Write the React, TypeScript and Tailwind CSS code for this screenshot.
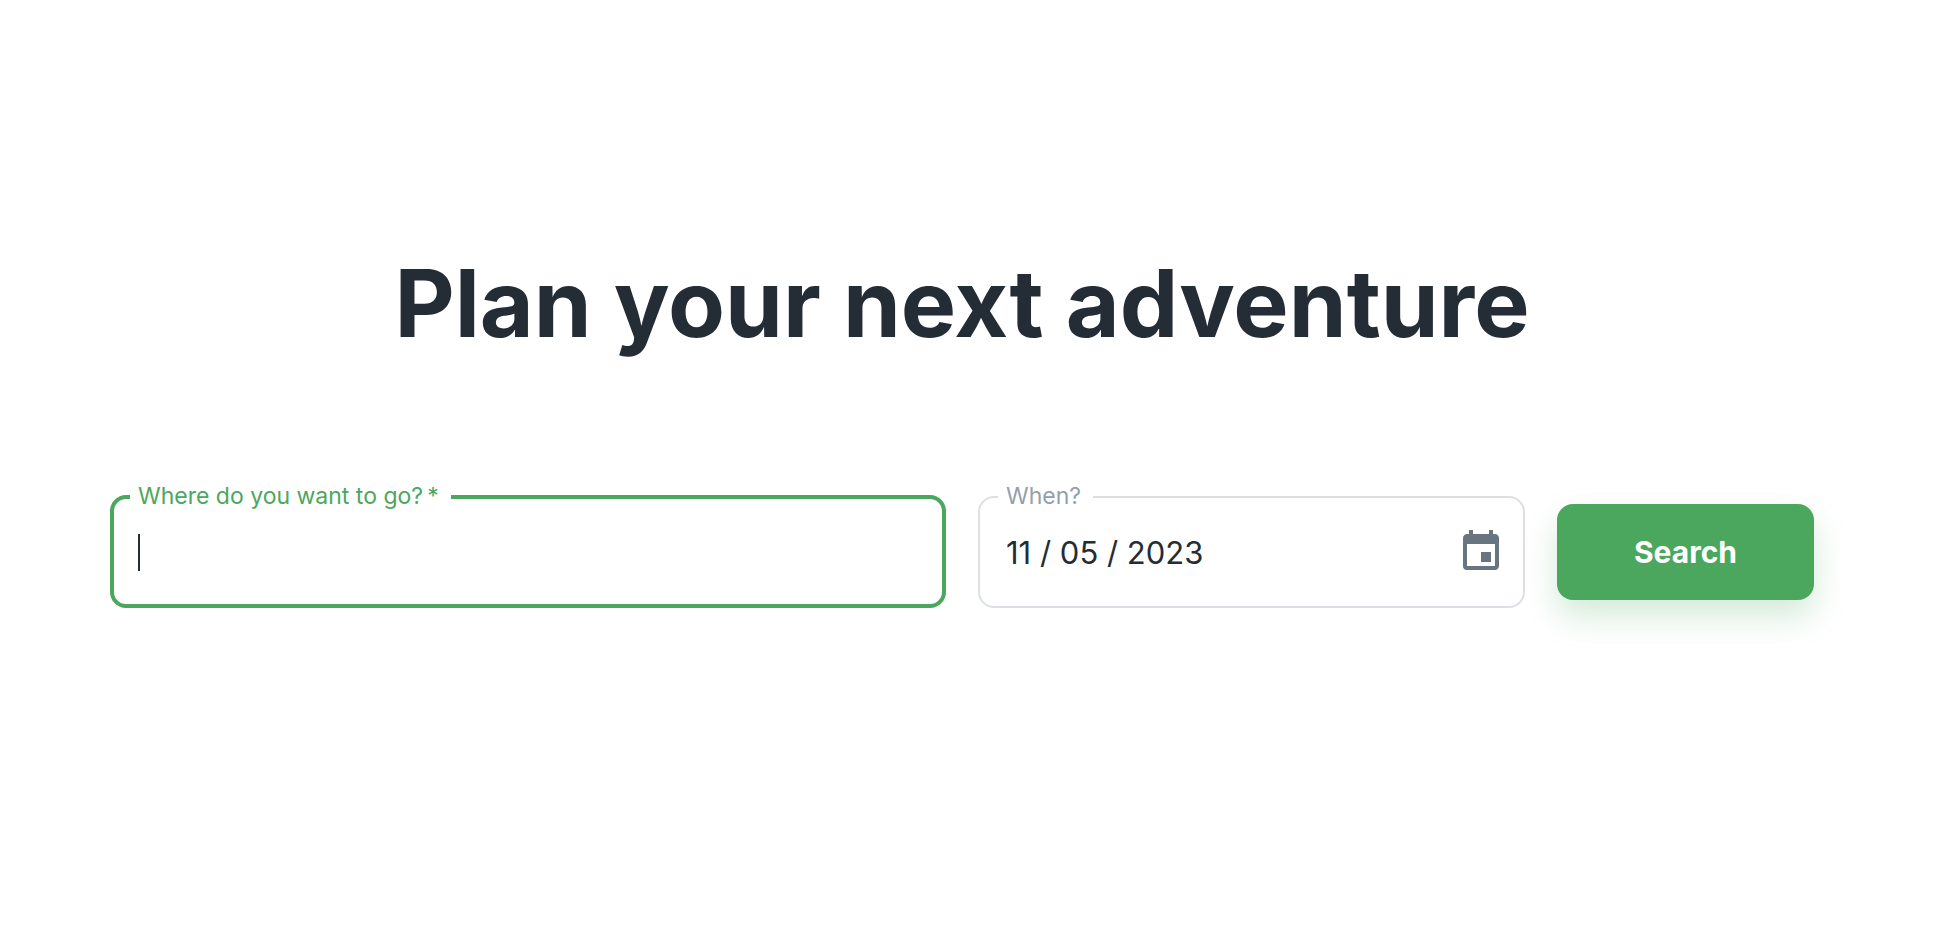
import { useState } from "react";
import type { ReactNode } from "react";
import { MdEvent } from "react-icons/md";

type FieldProps = {
  id: string;
  label: ReactNode;
  frame: string;
  legend: string;
  children: ReactNode;
};

function Field({ id, label, frame, legend, children }: FieldProps) {
  return (
    <fieldset className={`h-[124px] min-w-0 rounded-2xl ${frame}`}>
      <legend className={`pb-0.5 text-[23px] leading-6 whitespace-nowrap ${legend}`}>
        <label htmlFor={id} className="block">{label}</label>
      </legend>
      <div className="flex h-[84px] items-center pl-2">{children}</div>
    </fieldset>
  );
}

const inputClass =
  "h-12 w-full min-w-0 bg-transparent text-[31px] text-[#242c35] outline-none";

export default function App() {
  const [place, setPlace] = useState("");
  const [date, setDate] = useState("11 / 05 / 2023");

  return (
    <main className="min-h-screen bg-white pt-[231px] pr-[130px] pb-16 pl-[110px] font-['Inter',sans-serif] text-[#242c35]">
      <h1 className="text-center text-[93px] leading-[144px] font-bold">Plan your next adventure</h1>
      <form
        className="mt-[109px] grid grid-cols-[836fr_547fr_257px] items-center gap-8"
        onSubmit={(event) => event.preventDefault()}
      >
        <Field
          id="place"
          label={"Where do you want to go?\u2009*"}
          frame="border-4 border-[#4ca75e] px-4"
          legend="pr-3 pl-2 text-[#4ca75e]"
        >
          {place === "" && (
            <span aria-hidden="true" className="h-[37px] w-0.5 shrink-0 bg-[#242c35]" />
          )}
          <input
            id="place"
            type="text"
            required
            value={place}
            onChange={(event) => setPlace(event.target.value)}
            className={inputClass}
          />
        </Field>
        <Field
          id="date"
          label="When?"
          frame="border-2 border-[#dce0e4] px-[18px]"
          legend="pr-3 pl-2 text-[#959fab]"
        >
          <input
            id="date"
            type="text"
            value={date}
            onChange={(event) => setDate(event.target.value)}
            className={inputClass}
          />
          <button type="button" aria-label="Choose date" className="shrink-0 text-[#687480]">
            <MdEvent className="size-12" />
          </button>
        </Field>
        <button
          type="submit"
          className="mt-3 h-24 rounded-2xl bg-[#4ca75e] text-[30px] font-bold text-white shadow-[0_16px_32px_rgba(76,167,94,0.24)]"
        >
          Search
        </button>
      </form>
    </main>
  );
}
